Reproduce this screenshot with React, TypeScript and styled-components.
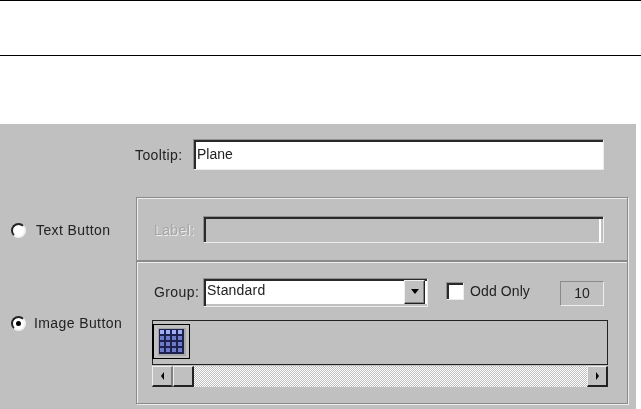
import React from "react";
import styled, { createGlobalStyle } from "styled-components";

const Global = createGlobalStyle`
  html, body { margin: 0; padding: 0; background: #fff; }
  body { font-family: "Liberation Sans", Arial, sans-serif; font-size: 14px; color: #111; }
`;
const Page = styled.div`
  width: 641px; height: 409px; overflow: hidden; display: flex; flex-direction: column;
`;
const Rule = styled.div<{ $gap: number }>`
  height: 1px; background: #000; margin-bottom: ${p => p.$gap}px; flex: none;
`;
const Panel = styled.div`
  width: 636px; height: 285px; background: #c0c0c0; flex: none; display: flex; flex-direction: column;
  filter: blur(0.35px);
`;
const TooltipRow = styled.div`
  display: flex; align-items: center; height: 31px; margin-top: 15px; padding-left: 135px;
`;
const Text = styled.span<{ $disabled?: boolean; $w?: number }>`
  white-space: nowrap; letter-spacing: 0.4px; flex: none;
  width: ${p => (p.$w ? `${p.$w}px` : "auto")};
  color: ${p => (p.$disabled ? "#a4a4a4" : "#222")};
  text-shadow: ${p => (p.$disabled ? "1px 1px 0 #eee" : "none")};
`;
const Sunken = styled.div<{ $w: number; $h: number; $bg?: string }>`
  box-sizing: border-box; width: ${p => p.$w}px; height: ${p => p.$h}px; flex: none;
  background: ${p => p.$bg ?? "#fff"}; color: #222;
  border: 1px solid; border-color: #909090 #ececec #ececec #909090;
  box-shadow: inset 2px 2px 0 #2a2a2a;
  display: flex; align-items: center; padding: 0 0 2px 3px; overflow: hidden;
`;
const DisabledField = styled(Sunken)`
  box-shadow: inset 2px 2px 0 #2a2a2a, inset -2px 0 0 #c0c0c0, inset -4px 0 0 #fff;
`;
const Body = styled.div`
  display: flex; margin-top: 27px;
`;
const RadioColumn = styled.div`
  width: 136px; flex: none; display: flex; flex-direction: column;
`;
const RadioRow = styled.div<{ $h: number; $gap: number }>`
  height: ${p => p.$h}px; display: flex; align-items: center; gap: ${p => p.$gap}px; padding-left: 11px; flex: none;
`;
const Radio = styled.div<{ $on?: boolean }>`
  box-sizing: border-box; width: 15px; height: 15px; border-radius: 50%; background: #fff; flex: none;
  border: 2px solid; border-color: #222 #f0f0f0 #f0f0f0 #222;
  display: flex; align-items: center; justify-content: center;
  &::after { content: ""; width: 5px; height: 5px; border-radius: 50%; background: ${p => (p.$on ? "#000" : "transparent")}; }
`;
const Frames = styled.div`
  width: 492px; flex: none; display: flex; flex-direction: column;
`;
const Frame = styled.div<{ $h: number }>`
  box-sizing: border-box; height: ${p => p.$h}px; flex: none;
  border: 1px solid #8a8a8a;
  box-shadow: inset 1px 1px 0 #eee, 1px 1px 0 #eee;
  display: flex; flex-direction: column;
`;
const LabelRow = styled.div`
  display: flex; align-items: center; margin-top: 18px; padding-left: 17px;
`;
const GroupRow = styled.div`
  display: flex; align-items: center; margin-top: 16px; padding-left: 17px; height: 28px;
`;
const Combo = styled(Sunken)`
  position: relative; letter-spacing: 0.2px; padding-bottom: 4px; background: linear-gradient(#fff 25px, #c0c0c0 25px);
`;
const ComboArrow = styled.div`
  position: absolute; right: 2px; top: 1px; width: 21px; height: 24px; box-sizing: border-box; background: #c0c0c0;
  border: 1px solid; border-color: #eee #222 #222 #eee;
  box-shadow: inset -1px -1px 0 #808080;
  display: flex; align-items: center; justify-content: center;
  &::after { content: ""; border: 4px solid transparent; border-top: 5px solid #000; border-bottom: 0; }
`;
const Check = styled.div`
  box-sizing: border-box; width: 18px; height: 18px; background: #fff; margin: 0 0 2px 18px; flex: none;
  border: 1px solid; border-color: #909090 #ececec #ececec #909090;
  box-shadow: inset 2px 2px 0 #2a2a2a;
`;
const OddText = styled(Text)`
  margin-left: 6px; letter-spacing: 0.1px; width: 90px; margin-bottom: 2px;
`;
const Count = styled.div`
  box-sizing: border-box; width: 44px; height: 25px; flex: none; align-self: flex-end;
  border: 1px solid; border-color: #8a8a8a #eee #eee #8a8a8a; color: #222;
  display: flex; align-items: center; justify-content: center; padding-bottom: 2px;
`;
const ListBox = styled.div`
  box-sizing: border-box; width: 456px; height: 45px; margin: 14px 0 0 15px; flex: none;
  border: 1px solid #222; padding-top: 3px; display: flex; align-items: flex-start;
`;
const ItemCell = styled.div`
  box-sizing: border-box; width: 38px; height: 35px; border: 1px solid #000; border-left-width: 2px;
  display: flex; align-items: center; justify-content: center; margin-left: -1px;
`;
const Scrollbar = styled.div`
  display: flex; width: 456px; height: 21px; margin: 1px 0 0 15px; flex: none;
`;
const ScrollBtn = styled.div<{ $edge: string }>`
  box-sizing: border-box; width: 21px; height: 21px; background: #c0c0c0; flex: none;
  border-style: solid; border-width: 1px 2px 2px 1px; border-color: #eee ${p => p.$edge} #222 #eee;
  display: flex; align-items: center; justify-content: center;
`;
const Track = styled.div`
  flex: 1; background: repeating-conic-gradient(#c0c0c0 0 25%, #fff 0 50%) 0 0 / 2px 2px;
`;
const ArrowL = styled.div`
  border: 4px solid transparent; border-right: 3px solid #000; border-left: 0;
`;
const ArrowR = styled.div`
  border: 4px solid transparent; border-left: 3px solid #000; border-right: 0;
`;

const GridIcon = () => (
  <svg width="28" height="28" viewBox="0 0 28 28">
    <rect width="28" height="28" fill="#a6a6a6" />
    <rect x="1" y="1" width="25" height="25" fill="#1c2150" />
    {[2, 8, 14, 20].flatMap(y =>
      [2, 8, 14, 20].map(x => (
        <rect key={`${x}-${y}`} x={x} y={y} width="4" height="4" fill={y < 8 ? "#a0acf4" : "#6c7ac8"} />
      ))
    )}
  </svg>
);

export default function App() {
  return (
    <Page>
      <Global />
      <Rule $gap={54} />
      <Rule $gap={68} />
      <Panel>
        <TooltipRow>
          <Text $w={58}>Tooltip:</Text>
          <Sunken $w={411} $h={31}>Plane</Sunken>
        </TooltipRow>
        <Body>
          <RadioColumn>
            <RadioRow $h={66} $gap={10}><Radio /><Text>Text Button</Text></RadioRow>
            <RadioRow $h={120} $gap={8}><Radio $on /><Text>Image Button</Text></RadioRow>
          </RadioColumn>
          <Frames>
            <Frame $h={64}>
              <LabelRow>
                <Text $disabled $w={49}>Label:</Text>
                <DisabledField $w={401} $h={27} $bg="#c0c0c0" />
              </LabelRow>
            </Frame>
            <Frame $h={143}>
              <GroupRow>
                <Text $w={49}>Group:</Text>
                <Combo $w={225} $h={29}>Standard<ComboArrow /></Combo>
                <Check />
                <OddText>Odd Only</OddText>
                <Count>10</Count>
              </GroupRow>
              <ListBox><ItemCell><GridIcon /></ItemCell></ListBox>
              <Scrollbar>
                <ScrollBtn $edge="#808080"><ArrowL /></ScrollBtn>
                <ScrollBtn $edge="#222" />
                <Track />
                <ScrollBtn $edge="#222"><ArrowR /></ScrollBtn>
              </Scrollbar>
            </Frame>
          </Frames>
        </Body>
      </Panel>
    </Page>
  );
}
